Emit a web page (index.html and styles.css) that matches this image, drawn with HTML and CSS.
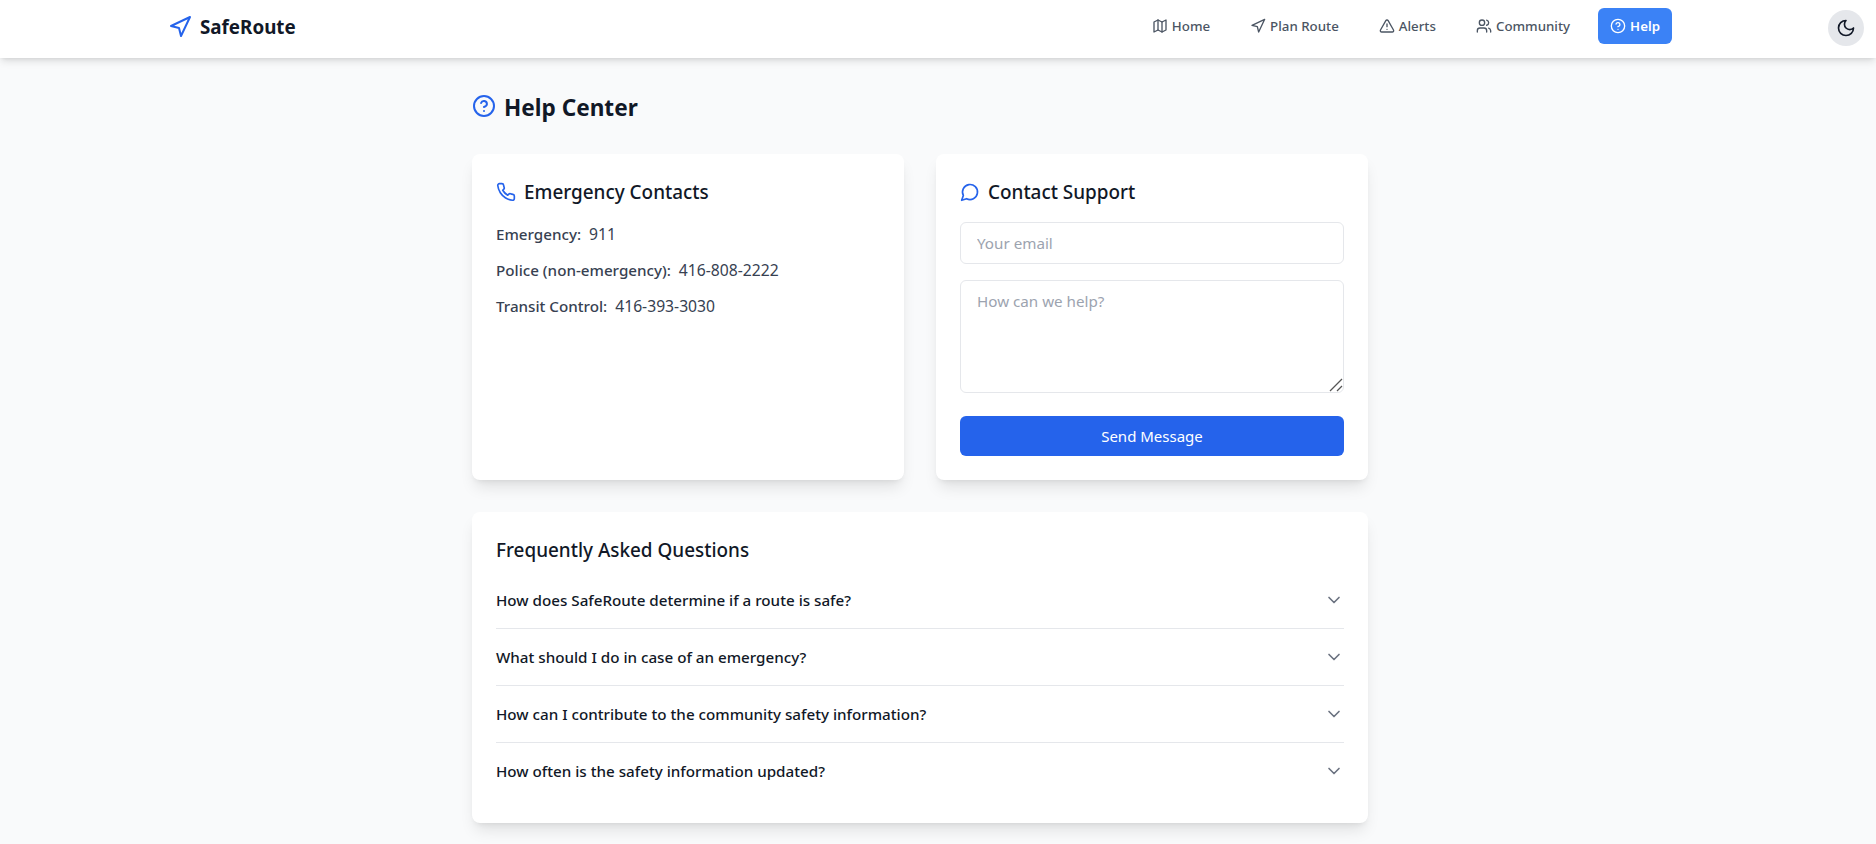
FILE: index.html
```html
<!DOCTYPE html>
<html lang="en">
  <head>
    <meta charset="UTF-8" />
    <title>SafeRoute - Help Center</title>
    <link rel="stylesheet" href="styles.css">
  </head>
  <body>
    <header class="topbar">
      <div class="topbar_inner">
        <a class="logo" href="#">
          <svg class="icon logo_icon" viewBox="0 0 24 24"><polygon points="3 11 22 2 13 21 11 13 3 11"/></svg>
          <span>SafeRoute</span>
        </a>
        <nav class="nav">
          <a class="nav_item" href="#">
            <svg class="icon" viewBox="0 0 24 24"><polygon points="3 6 9 3 15 6 21 3 21 18 15 21 9 18 3 21"/><line x1="9" y1="3" x2="9" y2="18"/><line x1="15" y1="6" x2="15" y2="21"/></svg>
            Home
          </a>
          <a class="nav_item" href="#">
            <svg class="icon" viewBox="0 0 24 24"><polygon points="3 11 22 2 13 21 11 13 3 11"/></svg>
            Plan Route
          </a>
          <a class="nav_item" href="#">
            <svg class="icon" viewBox="0 0 24 24"><path d="m21.73 18-8-14a2 2 0 0 0-3.48 0l-8 14A2 2 0 0 0 4 21h16a2 2 0 0 0 1.73-3"/><path d="M12 9v4"/><path d="M12 17h.01"/></svg>
            Alerts
          </a>
          <a class="nav_item" href="#">
            <svg class="icon" viewBox="0 0 24 24"><path d="M16 21v-2a4 4 0 0 0-4-4H6a4 4 0 0 0-4 4v2"/><circle cx="9" cy="7" r="4"/><path d="M22 21v-2a4 4 0 0 0-3-3.87"/><path d="M16 3.13a4 4 0 0 1 0 7.75"/></svg>
            Community
          </a>
          <a class="nav_item active" href="#">
            <svg class="icon" viewBox="0 0 24 24"><circle cx="12" cy="12" r="10"/><path d="M9.09 9a3 3 0 0 1 5.83 1c0 2-3 3-3 3"/><path d="M12 17h.01"/></svg>
            Help
          </a>
        </nav>
      </div>
      <button class="theme_btn" aria-label="Toggle theme">
        <svg class="icon" viewBox="0 0 24 24"><path d="M12 3a6 6 0 0 0 9 9 9 9 0 1 1-9-9Z"/></svg>
      </button>
    </header>

    <div class="content">
      <main class="page">
        <h1 class="page_title">
          <svg class="icon title_icon" viewBox="0 0 24 24"><circle cx="12" cy="12" r="10"/><path d="M9.09 9a3 3 0 0 1 5.83 1c0 2-3 3-3 3"/><path d="M12 17h.01"/></svg>
          <span class="page_title_text">Help Center</span>
        </h1>

        <div class="columns">
          <section class="card">
            <h2 class="card_title">
              <svg class="icon card_icon" viewBox="0 0 24 24"><path d="M22 16.92v3a2 2 0 0 1-2.18 2 19.79 19.79 0 0 1-8.63-3.07 19.5 19.5 0 0 1-6-6 19.79 19.79 0 0 1-3.07-8.67A2 2 0 0 1 4.11 2h3a2 2 0 0 1 2 1.72 12.84 12.84 0 0 0 .7 2.81 2 2 0 0 1-.45 2.11L8.09 9.91a16 16 0 0 0 6 6l1.27-1.27a2 2 0 0 1 2.11-.45 12.84 12.84 0 0 0 2.81.7A2 2 0 0 1 22 16.92z"/></svg>
              Emergency Contacts
            </h2>
            <ul class="contacts">
              <li><b>Emergency:</b> <span>911</span></li>
              <li><b>Police (non-emergency):</b> <span>416-808-2222</span></li>
              <li><b>Transit Control:</b> <span>416-393-3030</span></li>
            </ul>
          </section>

          <section class="card">
            <h2 class="card_title">
              <svg class="icon card_icon" viewBox="0 0 24 24"><path d="M7.9 20A9 9 0 1 0 4 16.1L2 22Z"/></svg>
              Contact Support
            </h2>
            <form class="support_form">
              <input class="field" type="email" placeholder="Your email">
              <div class="area_wrap">
                <textarea class="field field_area" rows="4" placeholder="How can we help?"></textarea>
                <svg class="grip" viewBox="0 0 14 14"><path d="M1 13 13 1"/><path d="M8 13l5-5"/></svg>
              </div>
              <button class="send_btn" type="button">Send Message</button>
            </form>
          </section>
        </div>

        <section class="card faq">
          <h2 class="card_title faq_title">Frequently Asked Questions</h2>
          <div class="faq_row">
            <span>How does SafeRoute determine if a route is safe?</span>
            <svg class="icon chevron" viewBox="0 0 24 24"><path d="m6 9 6 6 6-6"/></svg>
          </div>
          <div class="faq_row">
            <span>What should I do in case of an emergency?</span>
            <svg class="icon chevron" viewBox="0 0 24 24"><path d="m6 9 6 6 6-6"/></svg>
          </div>
          <div class="faq_row">
            <span>How can I contribute to the community safety information?</span>
            <svg class="icon chevron" viewBox="0 0 24 24"><path d="m6 9 6 6 6-6"/></svg>
          </div>
          <div class="faq_row">
            <span>How often is the safety information updated?</span>
            <svg class="icon chevron" viewBox="0 0 24 24"><path d="m6 9 6 6 6-6"/></svg>
          </div>
        </section>
      </main>
    </div>
  </body>
</html>
```
FILE: styles.css
```css
* {
  box-sizing: border-box;
}

body {
  margin: 0;
  background-color: #f9fafb;
  color: #111827;
  font-family: "Noto Sans", "Open Sans", sans-serif;
  font-size: 15.2px;
  line-height: 24px;
}

a {
  text-decoration: none;
  color: inherit;
}

.icon {
  width: 16px;
  height: 16px;
  flex: none;
  fill: none;
  stroke: currentColor;
  stroke-width: 2;
  stroke-linecap: round;
  stroke-linejoin: round;
}

/* header, the toggle takes a 36px column on the right */
.topbar {
  position: relative;
  height: 58px;
  padding-right: 36px;
  background-color: #fff;
  box-shadow: 0 4px 8px -1px rgba(0, 0, 0, 0.12), 0 2px 4px -2px rgba(0, 0, 0, 0.1);
}

.topbar_inner {
  max-width: 1536px;
  margin: 0 auto;
  padding: 8px 16px 0;
  display: flex;
  justify-content: space-between;
}

.logo {
  display: flex;
  align-items: center;
  gap: 8px;
  height: 38px;
  font-size: 18.8px;
  font-weight: 700;
}

.logo_icon {
  width: 24px;
  height: 24px;
  color: #2563eb;
}

.nav {
  display: flex;
  gap: 16px;
}

.nav_item {
  display: flex;
  align-items: center;
  gap: 4px;
  height: 36px;
  padding: 0 12px;
  border-radius: 6px;
  color: #4b5563;
  font-size: 13.3px;
  font-weight: 500;
}

.nav_item.active {
  background-color: #3b82f6;
  color: #fff;
  font-weight: 600;
}

.theme_btn {
  position: absolute;
  top: 10px;
  right: 12px;
  width: 36px;
  height: 36px;
  padding: 0;
  border: 0;
  border-radius: 50%;
  background-color: #e5e7eb;
  color: #111827;
  display: flex;
  align-items: center;
  justify-content: center;
}

.theme_btn .icon {
  width: 20px;
  height: 20px;
}

/* page */
.content {
  padding-right: 36px;
}

.page {
  width: 896px;
  margin: 0 auto;
  padding: 32px 0 20px;
}

.page_title {
  display: flex;
  align-items: center;
  gap: 8px;
  height: 32px;
  margin: 0 0 32px;
  font-size: 22.6px;
  line-height: 32px;
  font-weight: 700;
}

.page_title_text {
  padding-top: 3px;
}

.title_icon {
  width: 24px;
  height: 24px;
  color: #2563eb;
}

.columns {
  display: grid;
  grid-template-columns: 1fr 1fr;
  gap: 32px;
  margin-bottom: 32px;
}

.card {
  padding: 24px;
  background-color: #fff;
  border-radius: 8px;
  box-shadow: 0 10px 15px -3px rgba(0, 0, 0, 0.1), 0 4px 6px -4px rgba(0, 0, 0, 0.1);
}

.card_title {
  display: flex;
  align-items: center;
  gap: 8px;
  margin: 0 0 16px;
  font-size: 18.9px;
  line-height: 28px;
  font-weight: 500;
}

.card_icon {
  width: 20px;
  height: 20px;
  color: #2563eb;
}

.contacts {
  list-style: none;
  margin: 0;
  padding: 0;
  color: #374151;
}

.contacts li {
  margin-bottom: 12px;
}

.contacts b {
  font-weight: 500;
  margin-right: 4px;
}

.contacts span {
  font-size: 15.7px;
}

.support_form {
  display: flex;
  flex-direction: column;
}

.field {
  display: block;
  width: 100%;
  padding: 8px 16px;
  border: 1px solid #e5e7eb;
  border-radius: 6px;
  background-color: #fff;
  font-family: inherit;
  font-size: 15.2px;
  line-height: 24px;
  margin-bottom: 16px;
}

.field::placeholder {
  color: #9ca3af;
}

.area_wrap {
  position: relative;
  margin-bottom: 23px;
}

.field_area {
  height: 113px;
  margin-bottom: 0;
  resize: none;
}

.grip {
  position: absolute;
  right: 1px;
  bottom: 1px;
  width: 14px;
  height: 14px;
  fill: none;
  stroke: #555;
  stroke-width: 1.2;
}

.send_btn {
  height: 40px;
  border: 0;
  border-radius: 6px;
  background-color: #2563eb;
  color: #fff;
  font-family: inherit;
  font-size: 15px;
}

/* faq */
.faq_title {
  margin-bottom: 8px;
}

.faq_row {
  display: flex;
  align-items: center;
  justify-content: space-between;
  height: 57px;
  border-bottom: 1px solid #e5e7eb;
  font-weight: 500;
}

.faq_row:last-child {
  height: 56px;
  border-bottom: 0;
}

.chevron {
  width: 20px;
  height: 20px;
  color: #6b7280;
}
```
